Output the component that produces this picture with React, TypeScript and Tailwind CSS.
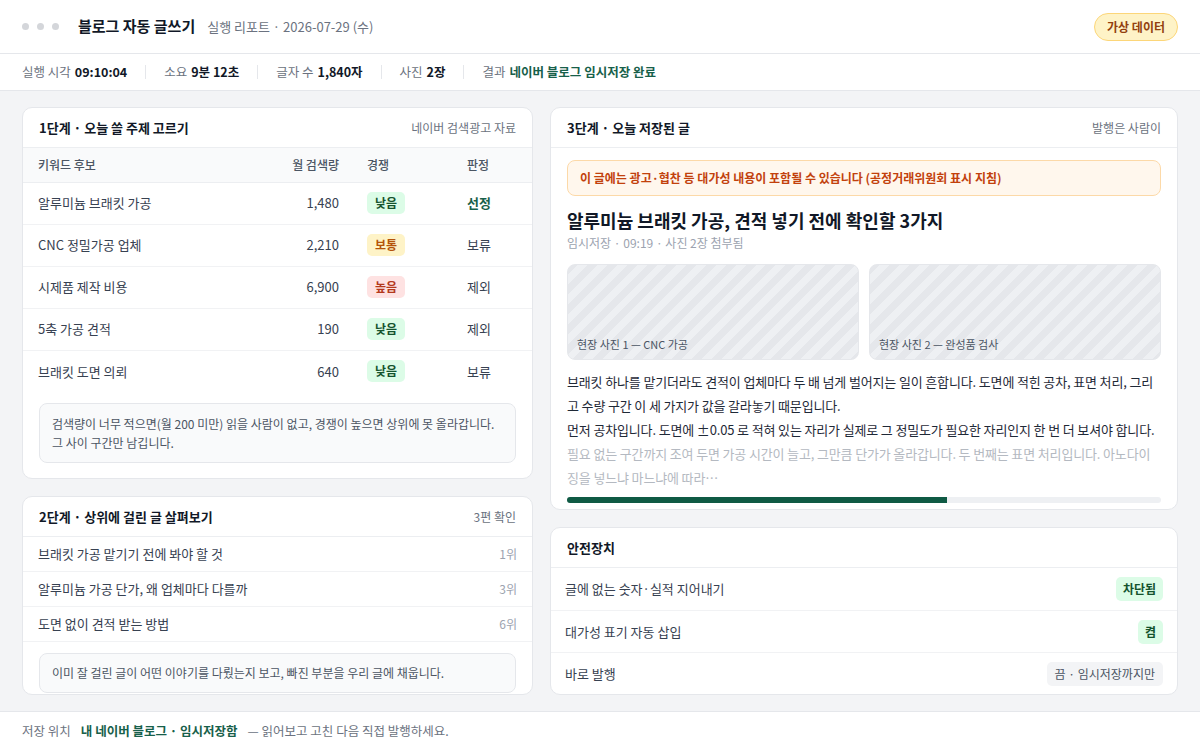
const font = { fontFamily: '"Noto Sans CJK KR", "Noto Sans", sans-serif' };

type Level = '낮음' | '보통' | '높음';

const keywords: { name: string; volume: string; level: Level; verdict: string; pick?: boolean }[] = [
  { name: '알루미늄 브래킷 가공', volume: '1,480', level: '낮음', verdict: '선정', pick: true },
  { name: 'CNC 정밀가공 업체', volume: '2,210', level: '보통', verdict: '보류' },
  { name: '시제품 제작 비용', volume: '6,900', level: '높음', verdict: '제외' },
  { name: '5축 가공 견적', volume: '190', level: '낮음', verdict: '제외' },
  { name: '브래킷 도면 의뢰', volume: '640', level: '낮음', verdict: '보류' },
];

const levelClass: Record<Level, string> = {
  낮음: 'bg-[#dcfce7] text-[#14532d]',
  보통: 'bg-[#fef3c7] text-[#b45309]',
  높음: 'bg-[#fee2e2] text-[#b4391c]',
};

const topPosts = [
  { title: '브래킷 가공 맡기기 전에 봐야 할 것', rank: '1위' },
  { title: '알루미늄 가공 단가, 왜 업체마다 다를까', rank: '3위' },
  { title: '도면 없이 견적 받는 방법', rank: '6위' },
];

function PanelHead({ title, right }: { title: string; right?: string }) {
  return (
    <div className="flex h-10 shrink-0 items-center justify-between border-b border-[#eceef1] px-4">
      <h2 className="text-[13px] font-bold text-[#111827]">{title}</h2>
      {right && <span className="text-[12px] text-[#6b7280]">{right}</span>}
    </div>
  );
}

function Stat({ label, value, green }: { label: string; value: string; green?: boolean }) {
  return (
    <div className="flex items-center gap-[4px]">
      <span className="text-[#6b7280]">{label}</span>
      <span className={green ? 'font-bold text-[#17604a]' : 'font-bold text-[#111827]'}>{value}</span>
    </div>
  );
}

function Sep() {
  return <div className="mx-[18px] h-[14px] w-px bg-[#e5e7eb]" />;
}

export default function App() {
  return (
    <div className="flex h-screen w-full flex-col overflow-hidden bg-[#f3f4f6]" style={font}>
      {/* top bar */}
      <header className="flex h-[54px] shrink-0 items-center border-b border-[#e5e7eb] bg-white px-[22px]">
        <div className="flex items-center gap-2">
          <span className="size-[7px] rounded-full bg-[#d4d6da]" />
          <span className="size-[7px] rounded-full bg-[#d4d6da]" />
          <span className="size-[7px] rounded-full bg-[#d4d6da]" />
        </div>
        <h1 className="ml-[19px] text-[15px] font-bold text-[#111827]">블로그 자동 글쓰기</h1>
        <span className="ml-3 text-[13px] text-[#6b7280]">실행 리포트 · 2026-07-29 (수)</span>
        <span className="ml-auto rounded-full border border-[#fcd679] bg-[#fef3c7] px-3 py-[4px] text-[12px] font-bold text-[#92400e]">
          가상 데이터
        </span>
      </header>

      {/* run stats */}
      <div className="flex h-[37px] shrink-0 items-center border-b border-[#e5e7eb] bg-white px-[22px] text-[12.5px]">
        <Stat label="실행 시각" value="09:10:04" />
        <Sep />
        <Stat label="소요" value="9분 12초" />
        <Sep />
        <Stat label="글자 수" value="1,840자" />
        <Sep />
        <Stat label="사진" value="2장" />
        <Sep />
        <Stat label="결과" value="네이버 블로그 임시저장 완료" green />
      </div>

      <main className="grid min-h-0 flex-1 grid-cols-[511px_minmax(0,1fr)] gap-[17px] px-[22px] py-[16px]">
        {/* left column */}
        <div className="flex min-h-0 flex-col gap-[17px]">
          <section className="shrink-0 overflow-hidden rounded-[10px] border border-[#e5e7eb] bg-white">
            <PanelHead title="1단계 · 오늘 쓸 주제 고르기" right="네이버 검색광고 자료" />
            <table className="w-full border-collapse">
              <thead>
                <tr className="h-[34px] border-b border-[#eceef1] bg-[#f9fafb] text-[12px] text-[#4b5563]">
                  <th className="pl-[15px] text-left font-medium">키워드 후보</th>
                  <th className="w-[120px] text-right font-medium">월 검색량</th>
                  <th className="w-[128px] pl-[28px] text-left font-medium">경쟁</th>
                  <th className="w-[65px] text-left font-medium">판정</th>
                </tr>
              </thead>
              <tbody>
                {keywords.map((k) => (
                  <tr key={k.name} className="h-[42px] border-b border-[#f1f2f4] text-[13px] text-[#374151] last:border-b-0">
                    <td className="pl-[15px]">{k.name}</td>
                    <td className="text-right">{k.volume}</td>
                    <td className="pl-[28px]">
                      <span className={`inline-block rounded-[5px] px-[8px] py-[2px] text-[12px] font-semibold ${levelClass[k.level]}`}>
                        {k.level}
                      </span>
                    </td>
                    <td className={k.pick ? 'font-bold text-[#17604a]' : ''}>{k.verdict}</td>
                  </tr>
                ))}
              </tbody>
            </table>
            <div className="mx-4 mb-[15px] mt-[11px] rounded-lg border border-[#e5e7eb] bg-[#f9fafb] px-3 py-[10px] text-[12px] leading-[19px] text-[#4b5563]">
              검색량이 너무 적으면(월 200 미만) 읽을 사람이 없고, 경쟁이 높으면 상위에 못 올라갑니다. 그 사이 구간만 남깁니다.
            </div>
          </section>

          <section className="min-h-0 flex-1 overflow-hidden rounded-[10px] border border-[#e5e7eb] bg-white">
            <PanelHead title="2단계 · 상위에 걸린 글 살펴보기" right="3편 확인" />
            {topPosts.map((p) => (
              <div key={p.title} className="flex h-[35px] items-center justify-between border-b border-[#f1f2f4] px-[15px] text-[13px] text-[#374151]">
                <span>{p.title}</span>
                <span className="text-[12px] text-[#9ca3af]">{p.rank}</span>
              </div>
            ))}
            <div className="mx-4 mt-[11px] rounded-lg border border-[#e5e7eb] bg-[#f9fafb] px-3 py-[9px] text-[12px] leading-[20px] text-[#4b5563]">
              이미 잘 걸린 글이 어떤 이야기를 다뤘는지 보고, 빠진 부분을 우리 글에 채웁니다.
            </div>
          </section>
        </div>

        {/* right column */}
        <div className="flex min-h-0 flex-col gap-[17px]">
          <section className="min-h-0 flex-1 overflow-hidden rounded-[10px] border border-[#e5e7eb] bg-white">
            <PanelHead title="3단계 · 오늘 저장된 글" right="발행은 사람이" />
            <div className="px-4 pt-3">
              <div className="rounded-lg border border-[#fcd9a8] bg-[#fff7ed] px-3 py-[8px] text-[12px] font-bold text-[#c2410c]">
                이 글에는 광고·협찬 등 대가성 내용이 포함될 수 있습니다 (공정거래위원회 표시 지침)
              </div>
              <h3 className="mt-[11px] text-[18px] font-bold leading-[26px] text-[#111827]">
                알루미늄 브래킷 가공, 견적 넣기 전에 확인할 3가지
              </h3>
              <p className="mt-[1px] text-[12px] text-[#9ca3af]">임시저장 · 09:19 · 사진 2장 첨부됨</p>

              <div className="mt-[12px] grid grid-cols-2 gap-[10px]">
                {['현장 사진 1 — CNC 가공', '현장 사진 2 — 완성품 검사'].map((c) => (
                  <div
                    key={c}
                    className="flex h-[96px] items-end rounded-lg border border-[#e5e7eb] bg-[repeating-linear-gradient(135deg,#e5e7eb_0px,#e5e7eb_7px,#eef0f3_7px,#eef0f3_14px)] px-[9px] pb-[7px] text-[11px] text-[#4b5563]"
                  >
                    {c}
                  </div>
                ))}
              </div>

              <div className="mt-[10px] text-[13px] leading-[24px] tracking-[-0.15px] text-[#1f2937]">
                <p>
                  브래킷 하나를 맡기더라도 견적이 업체마다 두 배 넘게 벌어지는 일이 흔합니다. 도면에 적힌 공차, 표면 처리, 그리고 수량 구간 이 세 가지가 값을 갈라놓기 때문입니다.
                </p>
                <p>
                  먼저 공차입니다. 도면에 ±0.05 로 적혀 있는 자리가 실제로 그 정밀도가 필요한 자리인지 한 번 더 보셔야 합니다.
                </p>
                <p className="text-[#b4b9c1]">
                  필요 없는 구간까지 조여 두면 가공 시간이 늘고, 그만큼 단가가 올라갑니다. 두 번째는 표면 처리입니다. 아노다이징을 넣느냐 마느냐에 따라…
                </p>
              </div>

              <div className="mt-[7px] h-[6px] w-full overflow-hidden rounded-full bg-[#eef0f3]">
                <div className="h-full bg-[#0f5a44]" style={{ width: '64%' }} />
              </div>
            </div>
          </section>

          <section className="shrink-0 overflow-hidden rounded-[10px] border border-[#e5e7eb] bg-white">
            <PanelHead title="안전장치" />
            <div className="flex h-[43px] items-center justify-between border-b border-[#f1f2f4] px-[14px] text-[13px] text-[#374151]">
              <span>글에 없는 숫자·실적 지어내기</span>
              <span className="rounded-[5px] bg-[#dcfce7] px-[7px] py-[3px] text-[12px] font-bold text-[#14532d]">차단됨</span>
            </div>
            <div className="flex h-[42px] items-center justify-between border-b border-[#f1f2f4] px-[14px] text-[13px] text-[#374151]">
              <span>대가성 표기 자동 삽입</span>
              <span className="rounded-[5px] bg-[#dcfce7] px-[7px] py-[3px] text-[12px] font-bold text-[#14532d]">켬</span>
            </div>
            <div className="flex h-[41px] items-center justify-between px-[14px] text-[13px] text-[#374151]">
              <span>바로 발행</span>
              <span className="rounded-[5px] bg-[#f3f4f6] px-[8px] py-[3px] text-[12px] text-[#4b5563]">끔 · 임시저장까지만</span>
            </div>
          </section>
        </div>
      </main>

      <footer className="flex h-[39px] shrink-0 items-center gap-[10px] border-t border-[#e5e7eb] bg-white px-[22px] text-[12.5px]">
        <span className="text-[#6b7280]">저장 위치</span>
        <span className="font-bold text-[#17604a]">내 네이버 블로그 · 임시저장함</span>
        <span className="text-[#6b7280]">— 읽어보고 고친 다음 직접 발행하세요.</span>
      </footer>
    </div>
  );
}
